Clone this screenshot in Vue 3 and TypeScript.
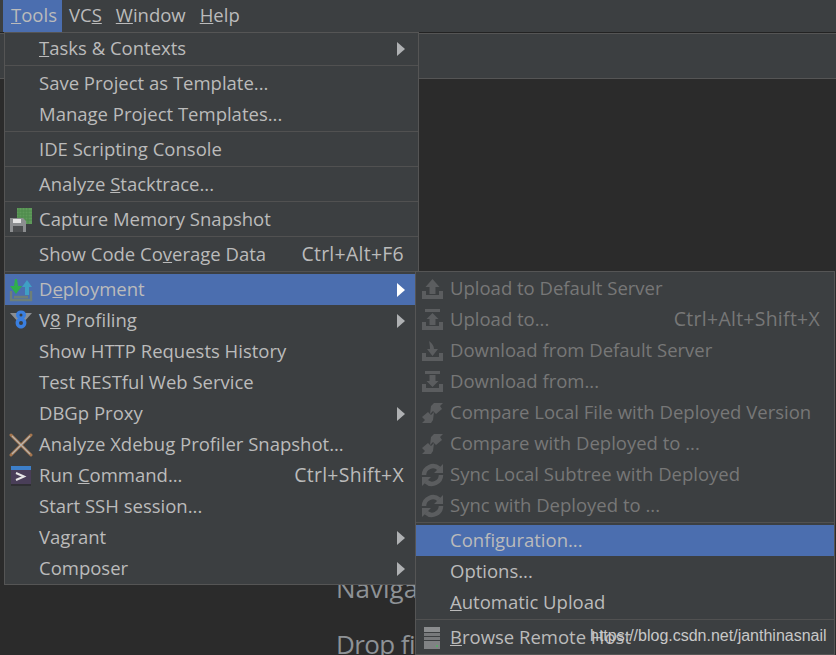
<script setup lang="ts">
interface Row {
  sep?: boolean
  pre?: string
  key?: string
  post?: string
  icon?: string
  shortcut?: string
  arrow?: boolean
  active?: boolean
  disabled?: boolean
}

const menuBar = [
  { pre: '', key: 'T', post: 'ools', open: true },
  { pre: 'VC', key: 'S', post: '', open: false },
  { pre: '', key: 'W', post: 'indow', open: false },
  { pre: '', key: 'H', post: 'elp', open: false },
]

const sep: Row = { sep: true }

const toolsMenu: Row[] = [
  { key: 'T', post: 'asks & Contexts', arrow: true },
  sep,
  { pre: 'Save Project as Template...' },
  { pre: 'Manage Project Templates...' },
  sep,
  { pre: 'IDE Scripting Console' },
  sep,
  { pre: 'Analyze ', key: 'S', post: 'tacktrace...' },
  sep,
  { pre: 'Capture Memory Snapshot', icon: 'capture' },
  sep,
  { pre: 'Show Code Co', key: 'v', post: 'erage Data', shortcut: 'Ctrl+Alt+F6' },
  sep,
  { pre: 'D', key: 'e', post: 'ployment', icon: 'deploy', arrow: true, active: true },
  { pre: 'V', key: '8', post: ' Profiling', icon: 'v8', arrow: true },
  { pre: 'Show HTTP Requests History' },
  { pre: 'Test RESTful Web Service' },
  { pre: 'DBGp Proxy', arrow: true },
  { pre: 'Analyze Xdebug Profiler Snapshot...', icon: 'xdebug' },
  { pre: 'Run ', key: 'C', post: 'ommand...', icon: 'run', shortcut: 'Ctrl+Shift+X' },
  { pre: 'Start SSH session...' },
  { pre: 'Vagrant', arrow: true },
  { pre: 'Composer', arrow: true },
]

const deployMenu: Row[] = [
  { pre: 'Upload to Default Server', icon: 'up', disabled: true },
  { pre: 'Upload to...', icon: 'upTo', shortcut: 'Ctrl+Alt+Shift+X', disabled: true },
  { pre: 'Download from Default Server', icon: 'down', disabled: true },
  { pre: 'Download from...', icon: 'downFrom', disabled: true },
  { pre: 'Compare Local File with Deployed Version', icon: 'compare', disabled: true },
  { pre: 'Compare with Deployed to ...', icon: 'compare', disabled: true },
  { pre: 'Sync Local Subtree with Deployed', icon: 'sync', disabled: true },
  { pre: 'Sync with Deployed to ...', icon: 'sync', disabled: true },
  sep,
  { pre: 'Configuration...', active: true },
  { pre: 'Options...' },
  { key: 'A', post: 'utomatic Upload' },
  sep,
  { key: 'B', post: 'rowse Remote Host', icon: 'server' },
]

const menus = [
  { name: 'tools', rows: toolsMenu },
  { name: 'deploy', rows: deployMenu },
]
</script>

<template>
  <div class="ide">
    <nav class="menubar">
      <div v-for="m in menuBar" :key="m.key" class="menubar__item" :class="{ 'menubar__item--open': m.open }">
        {{ m.pre }}<u>{{ m.key }}</u>{{ m.post }}
      </div>
    </nav>
    <div class="toolbar"></div>
    <main class="editor">
      <p class="editor__hint editor__hint--nav">Navigate</p>
      <p class="editor__hint editor__hint--drop">Drop files</p>
    </main>

    <div v-for="menu in menus" :key="menu.name" class="menu" :class="`menu--${menu.name}`">
      <template v-for="(row, i) in menu.rows" :key="i">
        <div v-if="row.sep" class="menu__sep"></div>
        <div
          v-else
          class="menu__row"
          :class="{ 'menu__row--active': row.active, 'menu__row--disabled': row.disabled }"
        >
          <svg class="menu__icon" width="24" height="24" viewBox="0 0 24 24">
            <template v-if="row.icon === 'capture'">
              <rect x="8" y="0" width="15" height="16" fill="#5f9a5a" />
              <path d="M10 0v16M13 0v16M16 0v16M19 0v16M8 3h15M8 6h15M8 9h15M8 12h15" stroke="#4f8a4c" stroke-width="1" />
              <path d="M1 10h13l3 3v11H1z" fill="#8c8e90" />
              <rect x="4" y="11" width="8" height="4" fill="#e4e4e4" />
              <rect x="4" y="18" width="10" height="6" fill="#4d4f51" />
            </template>
            <template v-else-if="row.icon === 'deploy'">
              <path d="M2 13v9h20v-9M5 19h14" fill="none" stroke="#6e7f78" stroke-width="2.4" />
              <path d="M6 1l2 0 1 7h4l-6 8-6-8h4z" fill="#2fae4c" />
              <path d="M18 2l5 7h-3v8h-4V9h-3z" fill="#3f9fc4" />
            </template>
            <template v-else-if="row.icon === 'v8'">
              <path d="M1 4h7l2 10zM23 4h-7l-2 10z" fill="#8a8e93" />
              <path
                fill-rule="evenodd"
                d="M12 1.5c3.200 0 5 1.800 5 4.200 0 1.700-.8 3-2 3.800 1.500.8 2.400 2.200 2.400 4.200 0 3.200-2.300 5.800-5.400 5.800s-5.400-2.600-5.400-5.800c0-2 .9-3.400 2.400-4.200-1.200-.8-2-2.100-2-3.800 0-2.400 1.800-4.200 5-4.200zm0 3a1.500 1.500 0 1 0 0 3 1.500 1.500 0 0 0 0-3zm0 7.500a2 2 0 1 0 0 4 2 2 0 0 0 0-4z"
                fill="#3a7fe0"
              />
            </template>
            <template v-else-if="row.icon === 'xdebug'">
              <path d="M2 2l20 20M22 2L2 22" stroke="#a5764e" stroke-width="3" stroke-linecap="round" />
              <path d="M3 3l18 18M21 3L3 21" stroke="#b8b4ae" stroke-width="1.200" />
            </template>
            <template v-else-if="row.icon === 'run'">
              <rect x="2" y="2" width="20" height="20" fill="#2f2f33" />
              <rect x="2" y="2" width="20" height="4" fill="#3d7fc9" />
              <rect x="2" y="6" width="20" height="14" fill="#493e58" />
              <path d="M7 9l8 3.500-8 3.500" fill="none" stroke="#e6e6e6" stroke-width="2" />
            </template>
            <template v-else-if="row.icon === 'up'">
              <path d="M2 14v8h21v-8h-4v4H6v-4z" fill="#5b5d5f" />
              <path d="M12.500 2l7 8h-4v7h-6v-7h-4z" fill="#5b5d5f" />
            </template>
            <template v-else-if="row.icon === 'upTo'">
              <path d="M2 14v8h21v-8h-4v4H6v-4z" fill="#5b5d5f" />
              <rect x="5" y="1" width="15" height="3" fill="#5b5d5f" />
              <path d="M12.500 5l6 6h-3v6h-6v-6h-3z" fill="#5b5d5f" />
            </template>
            <template v-else-if="row.icon === 'down'">
              <path d="M2 14v8h21v-8h-4v4H6v-4z" fill="#5b5d5f" />
              <path d="M9 2c3 2 5 5 5 8h4l-5.500 7L7 10h3c0-3-.5-6-1-8z" fill="#5b5d5f" />
            </template>
            <template v-else-if="row.icon === 'downFrom'">
              <path d="M2 14v8h21v-8h-4v4H6v-4z" fill="#5b5d5f" />
              <rect x="5" y="1" width="15" height="3" fill="#5b5d5f" />
              <path d="M9.500 5h6v6h3l-6 6-6-6h3z" fill="#5b5d5f" />
            </template>
            <template v-else-if="row.icon === 'compare'">
              <path d="M14 2l9 0-3 3 2 3-6 5-3-3-3 3 1-8z" fill="#5b5d5f" />
              <path d="M11 22l-9 0 3-3-3-3 6-5 3 3 3-3-1 8z" fill="#5b5d5f" />
            </template>
            <template v-else-if="row.icon === 'sync'">
              <path d="M4 12a9 9 0 0 1 15-6.500" fill="none" stroke="#5b5d5f" stroke-width="4.500" />
              <path d="M21 12a9 9 0 0 1-15 6.500" fill="none" stroke="#5b5d5f" stroke-width="4.500" />
              <path d="M14 10h9V1zM11 14H2v9z" fill="#5b5d5f" />
            </template>
            <template v-else-if="row.icon === 'server'">
              <rect x="4" y="1" width="16" height="5" fill="#8b8d8f" />
              <rect x="4" y="7" width="16" height="3" fill="#77797b" />
              <rect x="4" y="11" width="16" height="3" fill="#77797b" />
              <rect x="4" y="15" width="16" height="8" fill="#808284" />
              <rect x="16" y="19" width="2" height="2" fill="#59a869" />
            </template>
          </svg>
          <span class="menu__label">{{ row.pre }}<u v-if="row.key">{{ row.key }}</u>{{ row.post }}</span>
          <span v-if="row.shortcut" class="menu__shortcut">{{ row.shortcut }}</span>
          <svg v-if="row.arrow" class="menu__arrow" width="8" height="14" viewBox="0 0 8 14">
            <path d="M0 0l8 7-8 7z" :fill="row.active ? '#fff' : '#afb1b3'" />
          </svg>
        </div>
      </template>
    </div>

    <div class="watermark">https://blog.csdn.net/janthinasnail</div>
  </div>
</template>

<style>
html,
body {
  margin: 0;
  background: #2b2b2b;
  overflow: hidden;
}
</style>

<style scoped>
.ide {
  position: relative;
  width: 836px;
  height: 655px;
  overflow: hidden;
  display: flex;
  flex-direction: column;
  background: #2b2b2b;
  font-family: 'Open Sans', 'Noto Sans', sans-serif;
  font-size: 18.5px;
  color: #bbb;
}

.menubar {
  display: flex;
  flex: none;
  height: 32px;
  padding-left: 3px;
  background: #3c3f41;
  border-bottom: 1px solid #232323;
}

.menubar__item {
  height: 32px;
  line-height: 30px;
  padding: 0 7px;
  white-space: pre;
}

.menubar__item--open {
  padding: 0 5px 0 8px;
  background: #4b6eaf;
}

.toolbar {
  flex: none;
  height: 44px;
  background: #3c3f41;
  border-top: 1px solid #555;
  border-bottom: 1px solid #555;
}

.editor {
  flex: 1;
  padding: 491px 0 0 336px;
  color: #8e9296;
  font-size: 26px;
}

.editor__hint {
  margin: 0;
  line-height: 36px;
  white-space: nowrap;
}

.editor__hint--nav {
  margin-bottom: 20px;
}

.editor__hint--drop {
  letter-spacing: -0.6px;
}

.menu {
  position: absolute;
  box-sizing: border-box;
  width: 415px;
  background: #3c3f41;
  border: 1px solid #555;
}

.menu--tools {
  left: 4px;
  top: 32px;
  height: 553px;
}

.menu--deploy {
  left: 415px;
  top: 271px;
  width: 420px;
  height: 384px;
  padding-top: 1px;
}

.menu__sep {
  height: 4px;
  box-sizing: border-box;
  padding-top: 1px;
}

.menu__sep::before {
  content: '';
  display: block;
  height: 1px;
  background: #515151;
}

.menu__row {
  display: flex;
  align-items: center;
  height: 31px;
  padding: 0 14px 0 4px;
  white-space: pre;
}

.menu__row--active {
  background: #4b6eaf;
}

.menu__row--disabled {
  color: #777;
}

.menu__icon {
  flex: none;
  margin-right: 6px;
}

.menu__label {
  flex: 1;
  padding-bottom: 2px;
}

.menu__shortcut {
  flex: none;
  padding-bottom: 2px;
  font-size: 19.4px;
  letter-spacing: 0.3px;
}

.menu__arrow {
  flex: none;
  margin-right: -1px;
}

.watermark {
  position: absolute;
  left: 590px;
  top: 626px;
  font-family: 'Liberation Sans', Arial, sans-serif;
  font-size: 16px;
  line-height: 20px;
  color: #c8c8c8;
  white-space: nowrap;
}
</style>
